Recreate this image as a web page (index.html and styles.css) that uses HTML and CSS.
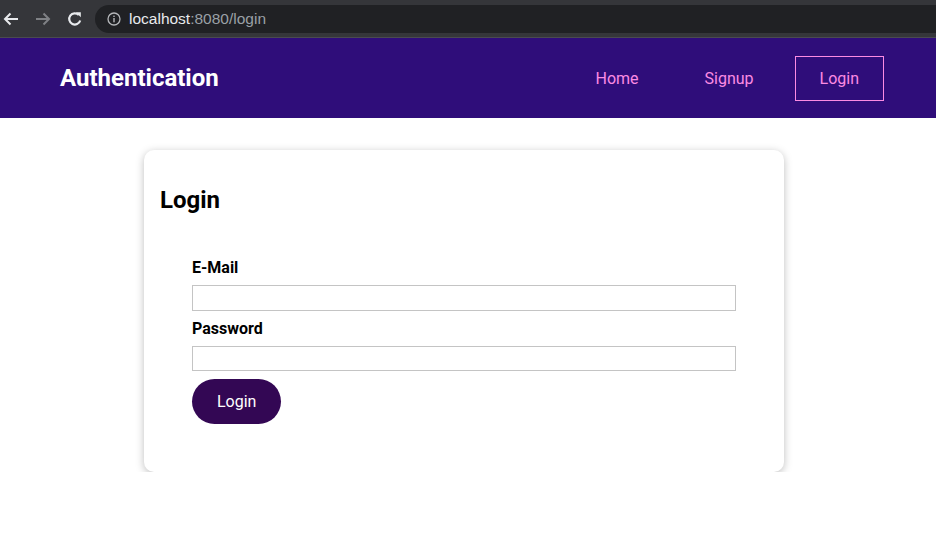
FILE: index.html
```html
<!DOCTYPE html>
<html lang="en">
<head>
<meta charset="utf-8">
<title>Authentication</title>
<link rel="stylesheet" href="styles.css">
</head>
<body>
<div class="chrome">
  <div class="chrome-nav">
    <svg class="ic" width="18" height="18" viewBox="0 0 18 18"><path d="M16 9H3M8.5 3.5L3 9l5.5 5.5" fill="none" stroke="#e8eaed" stroke-width="2"/></svg>
    <svg class="ic" width="18" height="18" viewBox="0 0 18 18"><path d="M2 9h13M9.5 3.5L15 9l-5.5 5.5" fill="none" stroke="#7f8185" stroke-width="2"/></svg>
    <svg class="ic" width="18" height="18" viewBox="0 0 18 18"><path d="M14.2 10.5A5.6 5.6 0 1 1 12.8 5" fill="none" stroke="#e8eaed" stroke-width="2.2"/><path d="M9.8 2.2h5v5z" fill="#e8eaed"/></svg>
  </div>
  <div class="omnibox">
    <svg class="info" width="14" height="14" viewBox="0 0 14 14"><circle cx="7" cy="7" r="6" fill="none" stroke="#b5b7ba" stroke-width="1.3"/><rect x="6.3" y="6" width="1.4" height="4.3" fill="#b5b7ba"/><rect x="6.3" y="3.6" width="1.4" height="1.4" fill="#b5b7ba"/></svg>
    <span class="url-host">localhost</span><span class="url-rest">:8080/login</span>
  </div>
</div>
<header class="navbar">
  <div class="brand">Authentication</div>
  <nav class="nav">
    <a class="nav-link">Home</a>
    <a class="nav-link">Signup</a>
    <a class="nav-link active">Login</a>
  </nav>
</header>
<main class="main">
  <section class="card">
    <h2 class="card-title">Login</h2>
    <form class="form">
      <label class="label">E-Mail</label>
      <input class="input" type="email">
      <label class="label">Password</label>
      <input class="input" type="password">
      <button class="btn" type="button">Login</button>
    </form>
  </section>
</main>
</body>
</html>
```
FILE: styles.css
```css
html, body {
  margin: 0;
  padding: 0;
  background: #ffffff;
  font-family: Roboto, "Liberation Sans", sans-serif;
}
.chrome {
  height: 37px;
  background: #35363a;
  border-bottom: 1px solid #4a4b4f;
  display: flex;
  align-items: center;
  box-sizing: content-box;
}
.chrome-nav {
  display: flex;
  align-items: center;
  gap: 14px;
  padding-left: 2px;
  width: 93px;
}
.ic { display: block; }
.omnibox {
  flex: 1;
  height: 28px;
  margin-top: 1px;
  background: #202124;
  border-radius: 14px 0 0 14px;
  display: flex;
  align-items: center;
  padding-left: 12px;
  font-family: "Liberation Sans", Arial, sans-serif;
  font-size: 15.5px;
}
.info { margin-right: 8px; }
.url-host { color: #e8eaed; }
.url-rest { color: #9aa0a6; }
.navbar {
  height: 80px;
  background: #2f0d7a;
  display: flex;
  align-items: center;
  justify-content: space-between;
  padding: 0 52px 0 60px;
}
.brand {
  color: #ffffff;
  font-weight: 700;
  font-size: 24px;
}
.nav {
  display: flex;
  gap: 16px;
  align-items: center;
}
.nav-link {
  color: #fb8be3;
  font-size: 16px;
  padding: 12px 24px;
  line-height: 19px;
  border: 1px solid transparent;
  cursor: pointer;
}
.nav-link.active {
  border-color: #fb8be3;
}
.main {
  padding: 32px 8px 0 0;
}
.card {
  width: 640px;
  box-sizing: border-box;
  margin: 0 auto;
  padding: 16px;
  border-radius: 10px;
  box-shadow: 0 2px 8px rgba(0, 0, 0, 0.26);
  background: #fff;
}
.card-title {
  font-size: 24px;
  font-weight: 700;
  margin: 20px 0;
  line-height: 28px;
}
.form {
  display: flex;
  flex-direction: column;
  align-items: flex-start;
  padding: 24px 32px;
}
.label {
  font-weight: 700;
  font-size: 16px;
  line-height: 19px;
  margin-bottom: 8px;
}
.input {
  width: 100%;
  box-sizing: border-box;
  height: 25.5px;
  border: 1px solid #c4c4c4;
  margin: 0 0 8px;
  padding: 2px 4px;
  font: inherit;
}
.btn {
  height: 45px;
  padding: 0 25px;
  border: none;
  border-radius: 23px;
  background: #330754;
  color: #ffffff;
  font-family: Roboto, "Liberation Sans", sans-serif;
  font-size: 16px;
  margin-bottom: 8px;
  cursor: pointer;
}
```
